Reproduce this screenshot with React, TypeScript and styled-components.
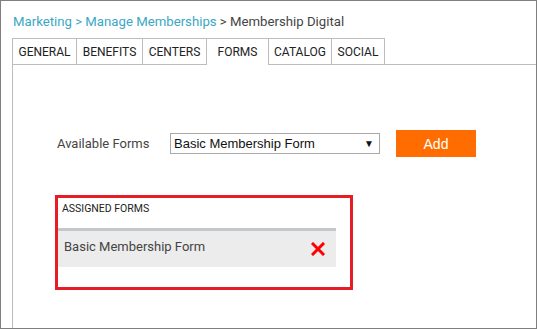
import React from "react";
import styled, { createGlobalStyle } from "styled-components";

const Global = createGlobalStyle`
  html, body { margin: 0; padding: 0; background: #fff; }
  body { font-family: Roboto, "Liberation Sans", Arial, sans-serif; }
  * { box-sizing: border-box; }
`;

const Frame = styled.div`
  width: 537px;
  height: 329px;
  border: 1px solid #7f7f7f;
  padding: 0 0 0 11px;
  display: flex;
  flex-direction: column;
  overflow: hidden;
`;

const Crumbs = styled.div`
  height: 37px;
  padding: 12px 0 0 1px;
  font-size: 13.2px;
  line-height: 18px;
  color: #444;
  white-space: nowrap;
`;

const CrumbLink = styled.a`
  color: #3aa7c4;
  text-decoration: none;
`;

const TabBar = styled.div`
  display: flex;
  align-items: flex-end;
  height: 27px;
  border-bottom: 1px solid #bdbdbd;
`;

const Tab = styled.div<{ $active?: boolean; $w: number }>`
  width: ${(p) => p.$w}px;
  height: ${(p) => (p.$active ? 27 : 26)}px;
  margin-left: -1px;
  margin-bottom: ${(p) => (p.$active ? -1 : 0)}px;
  border: 1px solid #bdbdbd;
  border-bottom: none;
  background: #fff;
  display: flex;
  align-items: flex-start;
  justify-content: center;
  padding-top: 6px;
  font-size: 12px;
  line-height: 14px;
  color: #222;
  text-transform: uppercase;
  &:first-child { margin-left: 0; }
`;

const Panel = styled.div`
  flex: 1;
  border-left: 1px solid #bdbdbd;
  padding: 65px 0 0 42px;
`;

const FormRow = styled.div`
  display: flex;
  align-items: center;
  height: 27px;
  padding-left: 2px;
`;

const Label = styled.label`
  width: 113px;
  font-size: 13px;
  color: #444;
`;

const Select = styled.div`
  width: 210px;
  height: 21px;
  border: 1px solid #a9a9a9;
  display: flex;
  align-items: center;
  justify-content: space-between;
  padding: 0 5px 0 3px;
  font-family: "Liberation Sans", Arial, sans-serif;
  font-size: 13px;
  color: #111;
`;

const Caret = styled.span`
  font-size: 10px;
  color: #111;
`;

const AddButton = styled.button`
  margin-left: 16px;
  width: 80px;
  height: 27px;
  border: none;
  background: #ff6c00;
  color: #fff;
  font-family: "Liberation Sans", Arial, sans-serif;
  font-size: 14px;
  padding: 0;
`;

const Assigned = styled.div`
  margin-top: 38px;
  width: 298px;
  height: 95px;
  border: 3px solid #e81c24;
  padding: 4px 14px 0 0;
`;

const AssignedTitle = styled.div`
  padding-left: 4px;
  font-size: 10.5px;
  line-height: 13px;
  color: #222;
  text-transform: uppercase;
`;

const AssignedItem = styled.div`
  margin-top: 13px;
  height: 39px;
  border-top: 3px solid #c3c6ca;
  background: #ececec;
  display: flex;
  align-items: center;
  justify-content: space-between;
  padding: 0 11px 5px 6px;
  font-size: 13px;
  color: #444;
`;

const RemoveIcon = styled.svg`
  width: 14px;
  height: 14px;
  margin-top: 5px;
`;

const tabs: [string, number][] = [
  ["General", 65],
  ["Benefits", 67],
  ["Centers", 65],
  ["Forms", 63],
  ["Catalog", 64],
  ["Social", 54],
];

export default function App() {
  return (
    <>
      <Global />
      <Frame>
        <Crumbs>
          <CrumbLink>Marketing &gt; Manage Memberships</CrumbLink> &gt; Membership Digital
        </Crumbs>
        <TabBar>
          {tabs.map(([t, w]) => (
            <Tab key={t} $w={w} $active={t === "Forms"}>
              {t}
            </Tab>
          ))}
        </TabBar>
        <Panel>
          <FormRow>
            <Label>Available Forms</Label>
            <Select>
              <span>Basic Membership Form</span>
              <Caret>▼</Caret>
            </Select>
            <AddButton>Add</AddButton>
          </FormRow>
          <Assigned>
            <AssignedTitle>Assigned Forms</AssignedTitle>
            <AssignedItem>
              <span>Basic Membership Form</span>
              <RemoveIcon viewBox="0 0 14 14">
                <path d="M2 2 L12 12 M12 2 L2 12" stroke="#ff0000" strokeWidth="3" strokeLinecap="square" />
              </RemoveIcon>
            </AssignedItem>
          </Assigned>
        </Panel>
      </Frame>
    </>
  );
}
